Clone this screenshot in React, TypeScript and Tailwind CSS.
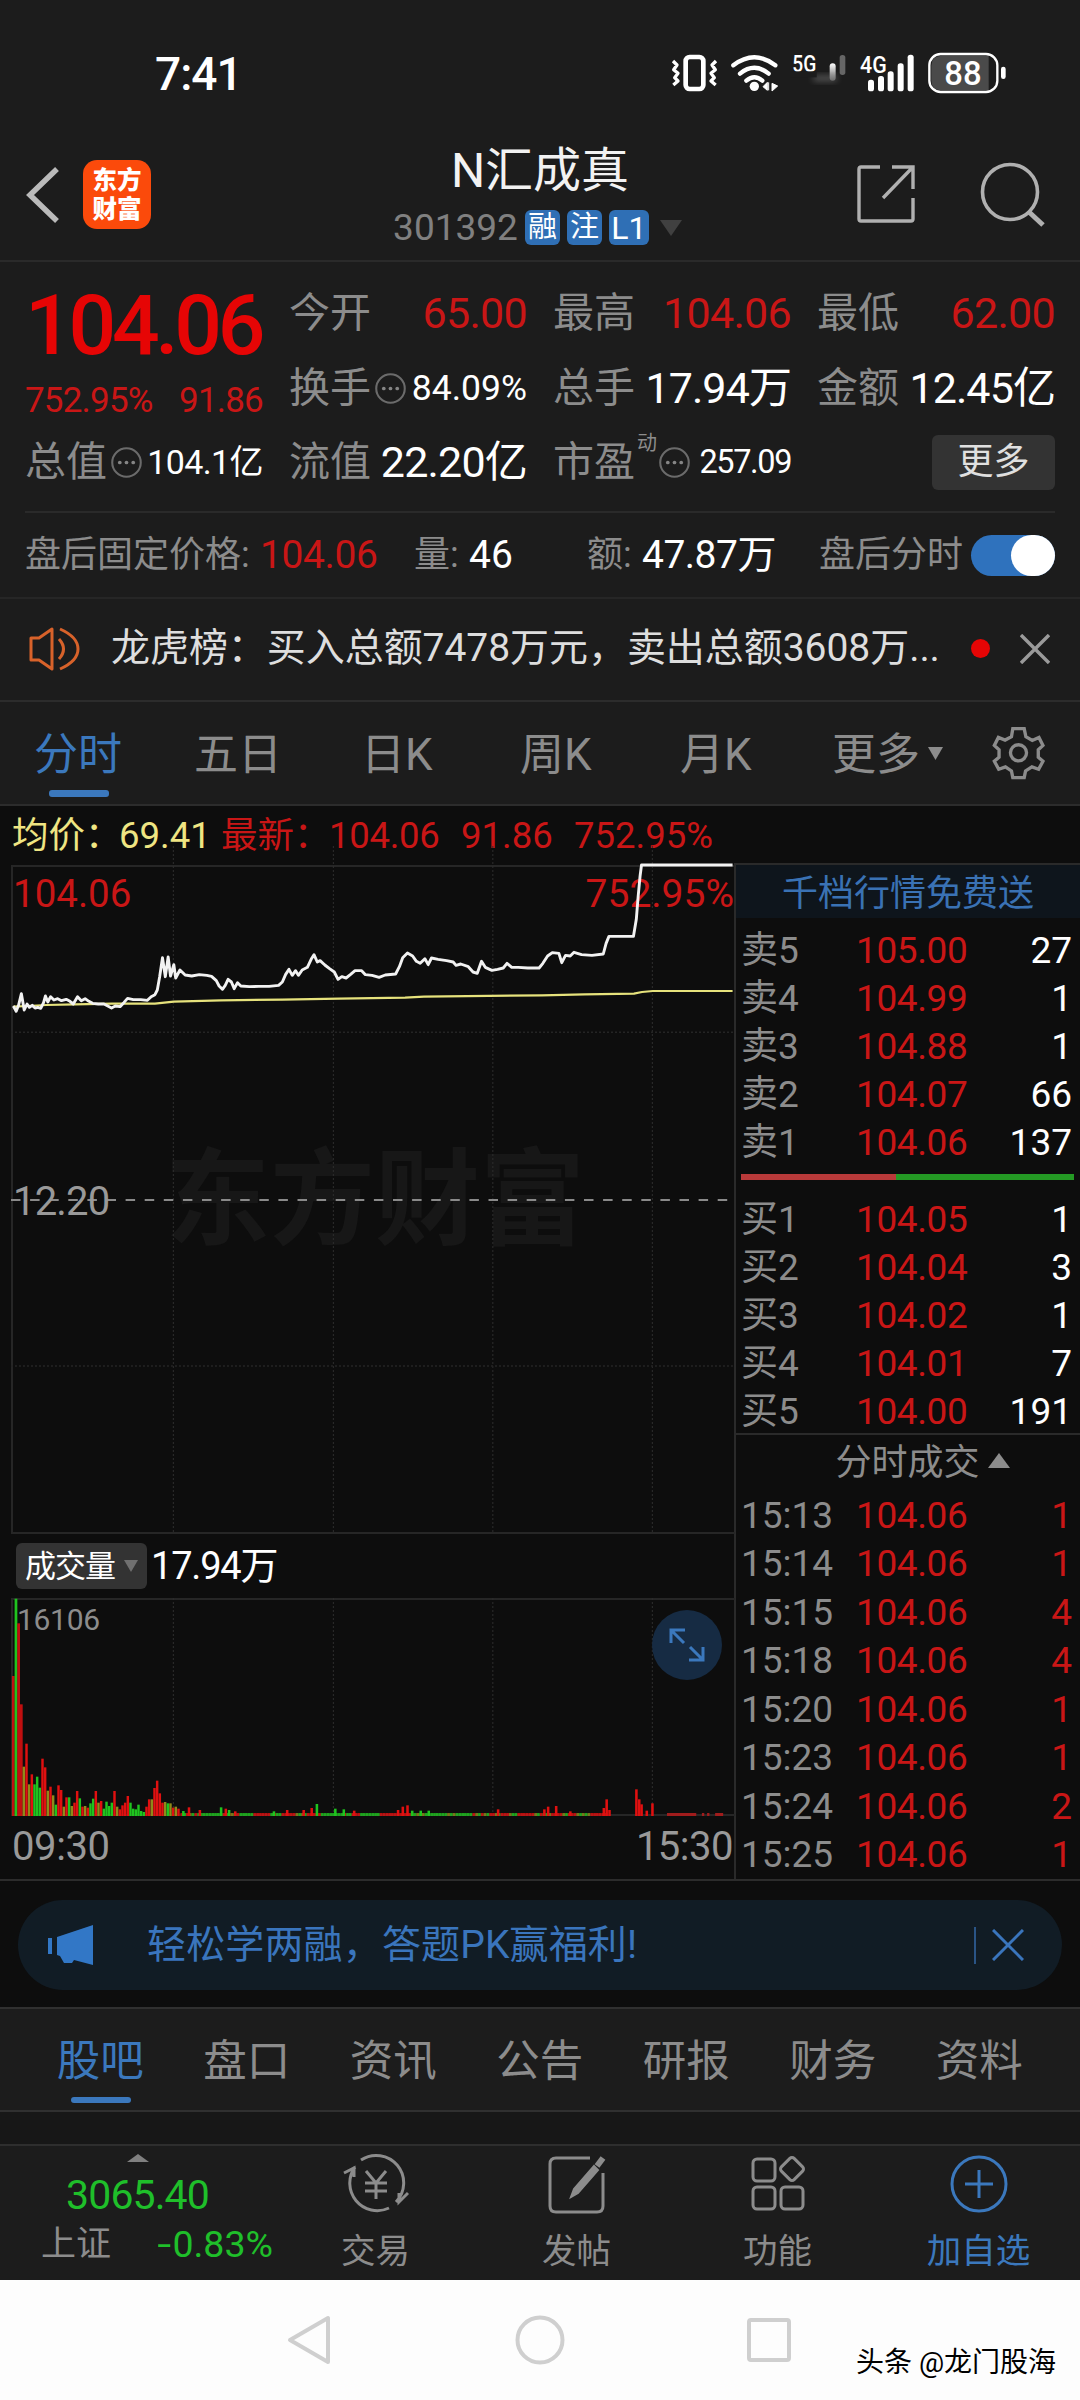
import React from 'react';

type Tone = 'r' | 'g' | 'o';

const sells = [
  ['卖5', '105.00', '27'],
  ['卖4', '104.99', '1'],
  ['卖3', '104.88', '1'],
  ['卖2', '104.07', '66'],
  ['卖1', '104.06', '137'],
];

const buys = [
  ['买1', '104.05', '1'],
  ['买2', '104.04', '3'],
  ['买3', '104.02', '1'],
  ['买4', '104.01', '7'],
  ['买5', '104.00', '191'],
];

const deals = [
  ['15:13', '104.06', '1'],
  ['15:14', '104.06', '1'],
  ['15:15', '104.06', '4'],
  ['15:18', '104.06', '4'],
  ['15:20', '104.06', '1'],
  ['15:23', '104.06', '1'],
  ['15:24', '104.06', '2'],
  ['15:25', '104.06', '1'],
];

const pricePoints =
  '30,480 36,496 41,478 47,443 53,492 59,474 64,484 70,478 76,486 82,484 88,487 94,470 98,450 103,468 109,452 116,462 124,458 132,464 142,460 150,466 157,474 166,452 174,464 182,458 190,466 198,472 210,474 222,474 230,480 238,486 246,480 256,482 264,470 272,457 284,461 300,461 314,463 322,452 330,446 335,432 340,392 346,335 352,392 358,333 363,390 370,356 374,396 383,372 394,387 408,390 424,386 440,388 450,391 460,404 466,420 473,430 479,418 485,400 492,408 498,428 505,410 512,420 530,422 550,421 572,421 592,418 600,408 607,385 614,370 621,388 628,374 634,388 642,372 653,364 661,340 667,326 674,348 680,344 690,357 700,368 710,378 718,400 726,392 735,396 744,386 754,374 768,374 776,386 790,388 805,394 818,387 840,384 848,362 855,335 865,321 876,330 884,346 892,352 902,338 909,356 916,336 930,340 948,344 962,348 968,358 978,354 994,362 1004,378 1013,382 1022,346 1030,364 1044,373 1056,370 1068,366 1076,352 1086,364 1100,364 1120,366 1144,366 1152,352 1162,330 1172,320 1186,322 1192,350 1200,328 1210,330 1218,319 1234,326 1256,328 1280,324 1286,292 1292,271 1344,271 1350,220 1354,150 1358,90 1361,57 1554,57';

const avgPoints =
  '30,482 60,480 100,477 160,475 240,473 330,473 370,467 470,463 600,461 720,458 860,455 900,452 1150,448 1240,445 1345,443 1362,438 1385,435 1554,435';

// opening hour, one bar a minute
const openBars: [number, Tone][] = [
  [420, 'r'], [652, 'g'], [578, 'r'], [335, 'r'], [148, 'o'], [217, 'r'], [95, 'o'], [125, 'r'],
  [95, 'g'], [118, 'g'], [85, 'g'], [172, 'r'], [146, 'r'], [76, 'o'], [88, 'r'], [62, 'o'],
  [34, 'g'], [92, 'r'], [78, 'r'], [28, 'o'], [56, 'r'], [56, 'g'], [30, 'o'], [40, 'r'],
  [75, 'r'], [53, 'g'], [28, 'r'], [30, 'o'], [25, 'r'], [38, 'g'], [52, 'g'], [75, 'r'],
  [40, 'o'], [45, 'r'], [22, 'g'], [43, 'g'], [30, 'g'], [40, 'g'], [75, 'r'], [28, 'o'],
  [20, 'r'], [32, 'r'], [40, 'r'], [60, 'r'], [40, 'g'], [22, 'g'], [20, 'g'], [34, 'g'],
  [15, 'g'], [12, 'g'], [28, 'r'], [50, 'r'], [50, 'o'], [84, 'r'], [106, 'r'], [68, 'r'],
  [40, 'r'], [42, 'o'], [38, 'g'], [38, 'o'], [25, 'r'], [28, 'o'], [22, 'r'],
];

const spikes: [number, number, Tone][] = [
  [390, 15, 'g'], [402, 26, 'r'], [425, 18, 'r'], [470, 26, 'g'], [480, 22, 'r'], [487, 18, 'g'],
  [500, 14, 'r'], [582, 14, 'g'], [610, 18, 'r'], [645, 18, 'r'], [662, 24, 'r'], [673, 36, 'g'],
  [712, 22, 'g'], [730, 20, 'g'], [752, 16, 'r'], [845, 18, 'r'], [855, 28, 'r'], [865, 32, 'r'],
  [875, 16, 'g'], [893, 16, 'g'], [910, 16, 'g'], [1057, 20, 'r'], [1155, 20, 'r'], [1163, 28, 'r'],
  [1180, 30, 'r'], [1210, 14, 'r'], [1287, 50, 'r'], [1281, 24, 'r'], [1293, 18, 'r'], [1350, 80, 'r'],
  [1356, 50, 'r'], [1361, 35, 'r'], [1372, 16, 'r'], [1384, 38, 'r'],
];

const flatTones = 'rgrogrgggggggggrgrogrgggggrrrrrrgrggrrrrrogogrrrrrggggggggrggrrrgggggggrrrrrrrrrrrogogoggggggggogoggggggrogrogrrogrrroggrrrrrrogrogorrrrogrrrogogorrrrrr';

const tone = { r: '#e01010', g: '#1fc41f', o: '#8f8a1a' };

const Grid = ({ h }: { h: number }) => (
  <g stroke="#2e2e2e" strokeWidth="1" strokeDasharray="2 2">
    {[369, 708, 1046, 1384].map((x) => (
      <line key={x} x1={x} x2={x} y1="0" y2={h} vectorEffect="non-scaling-stroke" />
    ))}
  </g>
);

const Dots = () => (
  <svg className="mx-[4px] h-[31px] w-[31px] shrink-0" viewBox="0 0 30 30">
    <circle cx="15" cy="15" r="13.800" fill="none" stroke="#6b6b6b" strokeWidth="2" />
    <g fill="#858585">
      <circle cx="8.500" cy="15" r="1.800" />
      <circle cx="15" cy="15" r="1.800" />
      <circle cx="21.500" cy="15" r="1.800" />
    </g>
  </svg>
);

const Cell = ({ label, value, cls, dots }: { label: string; value: string; cls: string; dots?: boolean }) => (
  <div className="flex h-full items-center whitespace-nowrap">
    <span className="text-[41px] text-[#8c8c8c]">{label}</span>
    {dots && <Dots />}
    <span className={'ml-auto ' + cls}>{value}</span>
  </div>
);

const Row = ({ item, num }: { item: string[]; num: string }) => (
  <div className="flex h-[48px] items-center pl-[5px] pr-[8px] text-[37px]">
    <span className="w-[115px] text-[#8c8c8c]">{item[0]}</span>
    <span className="tracking-[-0.4px] text-[#c91616]">{item[1]}</span>
    <span className={'ml-auto ' + num}>{item[2]}</span>
  </div>
);

const StatusBar = () => (
  <div className="flex h-[120px] items-start pt-[30px] pr-[40px] pl-[155px]">
    <span className="mt-[21px] text-[46px] font-medium tracking-[-1px] text-white">7:41</span>
    <svg className="ml-auto h-[90px] w-[400px]" viewBox="0 0 1200 270">
      <defs>
        <filter id="soft" x="-20%" y="-50%" width="140%" height="200%">
          <feGaussianBlur stdDeviation="9" />
        </filter>
        <linearGradient id="fade" x1="0" x2="0" y1="0" y2="1">
          <stop offset="0" stopColor="#fff" />
          <stop offset="1" stopColor="#fff" stopOpacity="0.3" />
        </linearGradient>
      </defs>
      <g fill="none" stroke="#fff">
        <rect x="137" y="81" width="53" height="96" rx="12" strokeWidth="14" />
        <path d="M99 93l12 12-10 14 13 11-10 13 10 10-14 12M228 93l-12 12 10 14-13 11 10 13-10 10 14 12" strokeWidth="10" strokeLinejoin="round" />
        <path d="M280 106Q343 58 406 106M300 131Q343 96 386 131M319 152Q343 132 367 152" strokeWidth="13" strokeLinecap="round" />
      </g>
      <circle cx="343" cy="169" r="14" fill="#fff" />
      <path d="M369 170l13-13v24zM386 157v24M396 160v23l17-15z" fill="#fff" stroke="#fff" strokeWidth="3" />
      <text x="457" y="127" fontSize="70" fontWeight="500" fill="#fff" textLength="72" lengthAdjust="spacingAndGlyphs">5G</text>
      <rect x="569" y="100" width="18" height="52" rx="9" fill="url(#fade)" />
      <rect x="599" y="75" width="17" height="60" rx="8" fill="#666" />
      <rect x="520" y="136" width="70" height="18" fill="#8a8a8a" opacity="0.5" filter="url(#soft)" />
      <rect x="450" y="124" width="80" height="18" fill="#1c1c1c" />
      <text x="660" y="128" fontSize="74" fontWeight="500" fill="#fff" textLength="80" lengthAdjust="spacingAndGlyphs">4G</text>
      <g fill="#fff">
        <rect x="684" y="149" width="18" height="35" rx="8" />
        <rect x="714" y="138" width="18" height="46" rx="8" />
        <rect x="743" y="124" width="18" height="60" rx="8" />
        <rect x="773" y="100" width="18" height="84" rx="8" />
        <rect x="803" y="74" width="18" height="110" rx="8" />
        <rect x="1083" y="110" width="14" height="37" rx="7" />
      </g>
      <path d="M1046 77H906q-32 0-32 30v44q0 30 32 30h140z" fill="#4a4a4a" />
      <rect x="868" y="72" width="204" height="114" rx="34" fill="none" stroke="#fff" strokeWidth="7" />
      <text x="913" y="164" fontSize="102" fontWeight="500" fill="#fff" textLength="112" lengthAdjust="spacingAndGlyphs">88</text>
    </svg>
  </div>
);

const Header = () => (
  <div className="flex h-[142px] justify-between border-b-2 border-[#2a2a2a] px-[25px]">
    <div className="flex w-[300px] pt-[40px]">
      <svg className="mt-[7px] h-[56px] w-[36px]" viewBox="0 0 36 56" fill="none" stroke="#bababa" strokeWidth="5.500">
        <path d="M32 2L5 28l27 26" />
      </svg>
      <div className="ml-[22px] flex h-[69px] w-[68px] flex-col items-center justify-center rounded-[14px] bg-[#fb4a0b] text-[24.500px] font-black text-white">
        <span className="leading-[29px]">东方</span>
        <span className="leading-[29px]">财富</span>
      </div>
    </div>
    <div className="flex flex-col items-center">
      <span className="mt-[27px] text-[48px] text-[#f2f2f2]">N汇成真</span>
      <div className="mt-[14px] -ml-[5px] flex h-[37px] items-center">
        <span className="mr-[7px] text-[37px] text-[#808080]">301392</span>
        <span className="mr-[7px] flex h-[35px] w-[35px] items-center justify-center rounded-[6px] bg-[#2f6fb5] text-[29px] text-white">融</span>
        <span className="mr-[7px] flex h-[35px] w-[35px] items-center justify-center rounded-[6px] bg-[#2f6fb5] text-[29px] text-white">注</span>
        <span className="flex h-[35px] w-[40px] items-center justify-center rounded-[6px] bg-[#2f6fb5] text-[32px] text-white">L1</span>
        <svg className="ml-[11px] h-[16px] w-[22px]" viewBox="0 0 22 16">
          <path d="M0 0h22L11 16z" fill="#404040" />
        </svg>
      </div>
    </div>
    <div className="flex w-[300px] justify-end pt-[42px] pr-[7px]">
      <svg className="mt-[2px] h-[60px] w-[60px]" viewBox="0 0 60 60" fill="none" stroke="#b0b0b0" strokeWidth="3.400">
        <path d="M24 3H5q-2 0-2 2v50q0 2 2 2h50q2 0 2-2V34M36 3h21v22M56 4L27 34" />
      </svg>
      <svg className="ml-[64px] h-[68px] w-[68px]" viewBox="0 0 68 68" fill="none" stroke="#b0b0b0" strokeWidth="3.600">
        <circle cx="30" cy="30" r="27.500" />
        <path d="M49 50l14 13" strokeWidth="5" />
      </svg>
    </div>
  </div>
);

const Quote = () => (
  <div className="flex h-[249px] flex-col px-[25px]">
    <div className="flex pt-[14px]">
      <div className="mr-[25px] w-[239px]">
        <div className="flex h-[98px] items-center text-[84px] font-medium tracking-[-4.300px] text-[#e60505]">
          <span className="pt-[2px]">104.06</span>
        </div>
        <div className="flex h-[52px] items-center justify-between pr-px text-[35px] text-[#c91616]">
          <span className="tracking-[-0.800px]">752.95%</span>
          <span className="tracking-[-0.800px]">91.86</span>
        </div>
      </div>
      <div className="grid w-[766px] grid-cols-3 grid-rows-[75px_75px] gap-x-[26px]">
        <Cell label="今开" value="65.00" cls="text-[43px] tracking-[-0.700px] text-[#c91616]" />
        <Cell label="最高" value="104.06" cls="text-[43px] tracking-[-0.700px] text-[#c91616]" />
        <Cell label="最低" value="62.00" cls="text-[43px] tracking-[-0.700px] text-[#c91616]" />
        <Cell label="换手" value="84.09%" cls="text-[35.500px] text-white" dots />
        <Cell label="总手" value="17.94万" cls="text-[43px] tracking-[-0.900px] text-white" />
        <Cell label="金额" value="12.45亿" cls="text-[43px] tracking-[-0.900px] text-white" />
      </div>
    </div>
    <div className="grid h-[72px] grid-cols-4 grid-rows-[72px] gap-x-[26px] whitespace-nowrap">
      <Cell label="总值" value="104.1亿" cls="text-[34px] tracking-[-0.600px] text-white" dots />
      <Cell label="流值" value="22.20亿" cls="text-[43px] tracking-[-0.800px] text-white" />
      <div className="flex items-center">
        <span className="text-[41px] text-[#8c8c8c]">市盈</span>
        <span className="ml-[2px] -mr-[2px] -mt-[38px] text-[20px] text-[#8c8c8c]">动</span>
        <Dots />
        <span className="ml-auto text-[32.500px] tracking-[-1.400px] text-white">257.09</span>
      </div>
      <div className="flex items-center justify-end">
        <span className="flex h-[55px] w-[123px] items-center justify-center rounded-[6px] bg-[#333] text-[36px] text-[#e0e0e0]">更多</span>
      </div>
    </div>
  </div>
);

const AfterHours = () => (
  <div className="h-[88px] border-b-2 border-[#262626] px-[25px]">
    <div className="flex h-[86px] items-center border-t-2 border-[#2a2a2a] text-[36px] text-[#8c8c8c]">
      <span className="w-[235px]">盘后固定价格:</span>
      <span className="w-[154px] text-[39px] tracking-[-0.400px] text-[#c91616]">104.06</span>
      <span className="w-[55px]">量:</span>
      <span className="w-[118px] text-[39px] text-white">46</span>
      <span className="w-[55px]">额:</span>
      <span className="w-[177px] text-[39px] tracking-[-0.500px] text-white">47.87万</span>
      <span className="w-[126px] whitespace-nowrap">盘后分时</span>
      <span className="ml-auto flex h-[41px] w-[84px] justify-end rounded-full bg-[#2f72bd]">
        <span className="h-[41px] w-[44px] rounded-full bg-white" />
      </span>
    </div>
  </div>
);

const Notice = () => (
  <div className="flex h-[103px] items-center border-b-2 border-[#2c2c2c] pr-[30px] pb-[2px] pl-[28px]">
    <svg className="h-[46px] w-[54px]" viewBox="0 0 54 46" fill="none" stroke="#d8622a" strokeWidth="3">
      <path d="M3 12h8L24 3v40l-13-9H3z" strokeLinejoin="round" />
      <path d="M31 13q9 10 0 20M32 3q18 8 18 20T32 43" />
    </svg>
    <span className="ml-[29px] text-[39px] tracking-[-0.050px] whitespace-nowrap text-[#dedede]">龙虎榜：买入总额7478万元，卖出总额3608万...</span>
    <span className="ml-auto h-[19px] w-[19px] rounded-full bg-[#e60505]" />
    <svg className="ml-[30px] h-[30px] w-[30px]" viewBox="0 0 30 30" stroke="#9a9a9a" strokeWidth="3.400">
      <path d="M1 1l28 28M29 1L1 29" />
    </svg>
  </div>
);

const ChartTabs = () => (
  <div className="flex h-[104px] items-center border-b-2 border-[#2c2c2c] pt-[4px] pl-[34px] text-[44px] text-[#8c8c8c]">
    <div className="relative w-[160px] text-[#3b78bd]">
      分时
      <span className="absolute top-[57px] left-[15px] h-[7px] w-[60px] rounded-[3px] bg-[#3b78bd]" />
    </div>
    <span className="w-[167px]">五日</span>
    <span className="w-[159px]">日K</span>
    <span className="w-[160px]">周K</span>
    <span className="w-[152px]">月K</span>
    <span>更多</span>
    <svg className="-mt-[4px] ml-[8px] h-[13px] w-[15px]" viewBox="0 0 15 13">
      <path d="M0 0h15L7.500 13z" fill="#8c8c8c" />
    </svg>
    <svg className="-mt-[4px] ml-[49px] h-[54px] w-[53px]" viewBox="516 80 158 161" fill="none" stroke="#8c8c8c" strokeWidth="10">
      <path d="M578 88h34l5 24 19 11 20-9 12 24-14 13v22l14 12-13 24-20-7-19 12-4 20h-34l-4-20-18-12-20 7-13-24 14-12v-22l-14-13 12-24 20 8 19-10z" />
      <circle cx="595" cy="160" r="24" />
    </svg>
  </div>
);

const Chart = () => (
  <div className="flex w-[735px] shrink-0 flex-col pl-[11px]">
    <div className="relative mt-[2px] h-[669px] border-t-2 border-b-2 border-l-2 border-[#262626]">
      <div className="absolute top-[281px] left-[152px] text-[105px] font-bold whitespace-nowrap text-[#171717]">东方财富</div>
      <svg className="absolute -top-[2px] -left-[2px] h-[669px] w-[723px] overflow-visible" viewBox="25 57 1532 2007" preserveAspectRatio="none">
        <Grid h={2064} />
        <g stroke="#242424" strokeWidth="1.500" strokeDasharray="2 2">
          <line x1="25" x2="1556" y1="559" y2="559" vectorEffect="non-scaling-stroke" />
          <line x1="25" x2="1556" y1="1560" y2="1560" vectorEffect="non-scaling-stroke" />
        </g>
        <line x1="25" x2="1556" y1="1062" y2="1062" stroke="#8a8a8a" strokeWidth="2" strokeDasharray="9.500 9.600" vectorEffect="non-scaling-stroke" />
      </svg>
      <span className="absolute top-[8px] left-0 text-[38.500px] text-[#c91616]">104.06</span>
      <span className="absolute top-[8px] right-[1px] text-[39px] text-[#c91616]">752.95%</span>
      <span className="absolute top-[315px] left-0 text-[40px] tracking-[-0.800px] text-[#999]">12.20</span>
      <svg className="absolute -top-[2px] -left-[2px] h-[669px] w-[723px] overflow-visible" viewBox="25 57 1532 2007" preserveAspectRatio="none" fill="none" strokeLinejoin="round">
        <polyline points={avgPoints} stroke="#e6e27c" strokeWidth="2.200" vectorEffect="non-scaling-stroke" />
        <polyline points={pricePoints} stroke="#f2f2f2" strokeWidth="2.900" vectorEffect="non-scaling-stroke" />
      </svg>
    </div>
    <div className="flex h-[64px] items-center pl-[5px] text-white">
      <span className="flex h-[46px] w-[131px] items-center rounded-[6px] bg-[#333] pl-[9px]">
        <span className="text-[31px] tracking-[-1px]">成交量</span>
        <svg className="ml-[9px] h-[12px] w-[14px]" viewBox="0 0 14 12">
          <path d="M0 0h14L7 12z" fill="#707070" />
        </svg>
      </span>
      <span className="ml-[4px] text-[38px] tracking-[-1.200px]">17.94万</span>
    </div>
    <div className="relative h-[218px] border-t-2 border-b-2 border-l-2 border-[#262626]">
      <svg className="absolute -top-[2px] -left-[2px] h-[218px] w-[723px]" viewBox="25 0 1532 654" preserveAspectRatio="none">
        <Grid h={654} />
      </svg>
      <span className="absolute top-[5px] left-[4px] text-[30px] tracking-[-0.300px] text-[#8c8c8c]">16106</span>
      <svg className="absolute -top-[2px] -left-[2px] h-[218px] w-[723px]" viewBox="25 0 1532 654" preserveAspectRatio="none">
        {openBars.map(([h, t], i) => (
          <rect key={i} x={27 + i * 5.65} y={654 - h} width={i > 3 ? 5.2 : 5.8} height={h} fill={tone[t]} opacity={i === 0 || i === 2 || i === 3 ? 0.85 : 1} />
        ))}
        {flatTones.split('').map((t, i) => (
          <rect key={i} x={384 + i * 5.95} y={645} width={5.9} height={9} fill={tone[t as Tone]} opacity="0.8" />
        ))}
        {spikes.map(([x, h, t], i) => (
          <rect key={i} x={x - 2.5} y={654 - h} width={5.4} height={h} fill={tone[t]} />
        ))}
        <path d="M1415 645h62v9h-62zM1489 645h5v9h-5zM1500 645h5v9h-5zM1517 645h17v9h-17z" fill="#a01c1c" />
      </svg>
      <div className="absolute top-[10px] right-[13px] flex h-[70px] w-[70px] items-center justify-center rounded-full bg-[#162b43]">
        <svg className="h-[34px] w-[36px]" viewBox="0 0 36 34" fill="none" stroke="#3b78bd" strokeWidth="3">
          <path d="M2 15V2h14M2 2l13 13M34 19v13H20M34 32L21 19" />
        </svg>
      </div>
    </div>
    <div className="flex h-[57px] items-center justify-between pt-[5px] pr-[2px] pl-px text-[40px] text-[#999]">
      <span className="tracking-[-0.400px]">09:30</span>
      <span className="tracking-[-0.500px]">15:30</span>
    </div>
  </div>
);

const OrderBook = () => (
  <div className="-ml-px flex flex-1 flex-col border-t-2 border-l-2 border-[#2a2a2a]">
    <div className="flex h-[61px] items-start justify-center bg-[#0e151c] bg-clip-content pb-[8px] text-[36px] text-[#3a72b4]">
      <span className="pt-[11px]">千档行情免费送</span>
    </div>
    {sells.map((s) => (
      <Row key={s[0]} item={s} num="text-white" />
    ))}
    <div className="mt-[8px] mr-[6px] mb-[15px] ml-[5px] flex h-[6px]">
      <span className="w-[155px] bg-[#b93a3a]" />
      <span className="flex-1 bg-[#249a24]" />
    </div>
    {buys.map((s) => (
      <Row key={s[0]} item={s} num="text-white" />
    ))}
    <div className="-mt-[2px] flex h-[58px] items-center justify-center border-t-2 border-[#2a2a2a] pl-[29px] text-[36px] text-[#8c8c8c]">
      分时成交
      <svg className="-mt-[6px] ml-[8px] h-[15px] w-[22px]" viewBox="0 0 22 15">
        <path d="M11 0l11 15H0z" fill="#8c8c8c" />
      </svg>
    </div>
    <div className="flex h-[388px] flex-col justify-between">
      {deals.map((s) => (
        <Row key={s[0]} item={s} num="text-[#c91616]" />
      ))}
    </div>
  </div>
);

const Banner = () => (
  <div className="h-[126px] bg-[#0d0d0d] px-[18px] pt-[19px]">
    <div className="flex h-[90px] items-center rounded-full bg-[#111c25] pr-[38px] pl-[29px] text-[#3a75bd]">
      <svg className="h-[40px] w-[47px]" viewBox="0 0 47 40" fill="#3277c6">
        <path d="M1 13h4v16H1zM10 12L46 0v40l-19-5-2 3h-8l-4-7-3-1z" />
      </svg>
      <span className="ml-[53px] text-[39px] tracking-[0.150px]">轻松学两融，答题PK赢福利!</span>
      <span className="ml-auto h-[37px] w-[2px] bg-[#2a5486]" />
      <svg className="ml-[16px] h-[32px] w-[32px]" viewBox="0 0 32 32" stroke="#3a75bd" strokeWidth="3">
        <path d="M1 1l30 30M31 1L1 31" />
      </svg>
    </div>
  </div>
);

const infoTabs = ['股吧', '盘口', '资讯', '公告', '研报', '财务', '资料'];

const InfoTabs = () => (
  <div className="flex h-[105px] items-center border-t-2 border-b-2 border-[#303030] pt-[4px] pl-[27px] text-[43.500px] text-[#8c8c8c]">
    {infoTabs.map((t, i) => (
      <div key={t} className={i === 0 ? 'relative w-[146.500px] text-center text-[#3b78bd]' : 'w-[146.500px] text-center'}>
        {t}
        {i === 0 && <span className="absolute top-[57px] left-[44px] h-[6px] w-[60px] rounded-[3px] bg-[#3b78bd]" />}
      </div>
    ))}
  </div>
);

const Action = ({ name, cls, children }: { name: string; cls: string; children: React.ReactNode }) => (
  <div className={'flex w-[201px] flex-col items-center pt-[5px] text-[34.500px] ' + cls}>
    <svg className="h-[66px] w-[66px]" viewBox="0 0 66 66" fill="none" stroke="currentColor" strokeWidth="3">
      {children}
    </svg>
    <span className="mt-[17px]">{name}</span>
  </div>
);

const BottomBar = () => (
  <div className="flex h-[136px] border-t-2 border-[#2e2e2e]">
    <div className="flex w-[275px] flex-col items-center">
      <svg className="mt-[8px] h-[8px] w-[22px]" viewBox="0 0 22 8">
        <path d="M11 0l11 8H0z" fill="#808080" />
      </svg>
      <span className="mt-[13px] text-[41px] tracking-[-0.900px] text-[#1fbf2a]">3065.40</span>
      <div className="mt-[10px] flex w-full items-center justify-between pr-[2px] pl-[41px]">
        <span className="text-[35px] text-[#8c8c8c]">上证</span>
        <span className="flex items-center text-[37.500px] text-[#1fbf2a]">
          <span className="mr-px origin-right scale-x-[1.35]">-</span>0.83%
        </span>
      </div>
    </div>
    <Action name="交易" cls="text-[#8c8c8c]">
      <path d="M18 9A27.500 27.500 0 0 1 53 51M46 57A27.500 27.500 0 0 1 12 16M1 22L11 17v9M65 42l-9 9v-9" />
      <path d="M23 20l10 12 10-12M33 32v16M22 32h22M22 40h22" />
    </Action>
    <Action name="发帖" cls="text-[#8c8c8c]">
      <path d="M46 7H12q-6 0-6 6v42q0 6 6 6h41q6 0 6-6V22" />
      <path d="M59 7l-6 8" strokeWidth="6" />
      <path d="M50 15l4 4-20 23-7 4 3-8z" fill="currentColor" strokeWidth="2" />
    </Action>
    <Action name="功能" cls="text-[#8c8c8c]">
      <rect x="8" y="8" width="22" height="22" rx="4" />
      <rect x="8" y="36" width="22" height="22" rx="4" />
      <rect x="36" y="36" width="22" height="22" rx="4" />
      <rect x="38" y="9" width="18" height="18" rx="3" transform="rotate(45 47 18)" />
    </Action>
    <Action name="加自选" cls="text-[#3b78bd]">
      <circle cx="33" cy="33" r="27" />
      <path d="M33 19v28M19 33h28" />
    </Action>
  </div>
);

const App = () => {
  return (
    <div className="flex h-[2400px] w-[1080px] flex-col overflow-hidden bg-[#1c1c1c] font-[Roboto,'Noto_Sans_CJK_SC',sans-serif] leading-none">
      <StatusBar />
      <Header />
      <Quote />
      <AfterHours />
      <Notice />
      <ChartTabs />
      <div className="flex h-[1075px] flex-col border-b-2 border-[#2c2c2c] bg-[#0d0d0d]">
        <div className="flex h-[63px] items-center pt-[3px] pl-[12px] text-[36.500px] whitespace-nowrap text-[#c91616]">
          <span className="w-[107px] text-[#efe583]">均价：</span>
          <span className="w-[102px] text-[#efe583]">69.41</span>
          <span className="w-[108px]">最新：</span>
          <span className="w-[132px] tracking-[-0.300px]">104.06</span>
          <span className="w-[113px]">91.86</span>
          <span>752.95%</span>
        </div>
        <div className="flex flex-1">
          <Chart />
          <OrderBook />
        </div>
      </div>
      <Banner />
      <InfoTabs />
      <div className="h-[32px] bg-[#171717]" />
      <BottomBar />
      <div className="flex flex-1 items-center bg-[#fdfdfd]">
        <svg className="ml-[286px] h-[52px] w-[46px]" viewBox="0 0 46 52" fill="none" stroke="#cfcfcf" strokeWidth="4">
          <path d="M42 4v44L4 26z" strokeLinejoin="round" />
        </svg>
        <svg className="ml-[182px] h-[52px] w-[52px]" viewBox="0 0 52 52" fill="none" stroke="#cfcfcf" strokeWidth="4">
          <circle cx="26" cy="26" r="22.500" />
        </svg>
        <svg className="ml-[179px] h-[48px] w-[48px]" viewBox="0 0 48 48" fill="none" stroke="#cfcfcf" strokeWidth="4">
          <rect x="4" y="4" width="40" height="40" rx="2" />
        </svg>
        <span className="mt-[46px] ml-[63px] text-[28px] whitespace-nowrap text-black [text-shadow:1px_1px_0_#fff]">头条 @龙门股海</span>
      </div>
    </div>
  );
};

export default App;
